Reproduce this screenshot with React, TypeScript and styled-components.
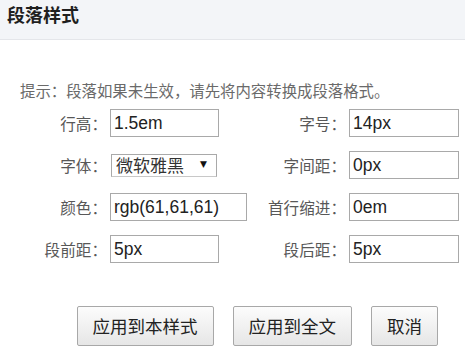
import React from "react";
import styled, { createGlobalStyle } from "styled-components";

const Global = createGlobalStyle`
  html, body { margin: 0; padding: 0; background: #fff; }
  body { width: 465px; height: 347px; overflow: hidden; font-family: "Noto Sans CJK SC", "Noto Sans", sans-serif; }
  * { box-sizing: border-box; }
`;

const Panel = styled.div`
  width: 465px;
  height: 347px;
  display: flex;
  flex-direction: column;
`;

const Header = styled.div`
  height: 40px;
  background: #f3f5f8;
  border-bottom: 1px solid #e4e6ea;
  display: flex;
  align-items: center;
  padding-left: 7px;
  padding-bottom: 11px;
`;

const Title = styled.h1`
  margin: 0;
  font-size: 18px;
  line-height: 20px;
  font-weight: 700;
  color: #1f1f1f;
  font-family: "Noto Sans CJK SC", sans-serif;
`;

const Body = styled.div`
  display: flex;
  flex-direction: column;
  padding-top: 40px;
`;

const Hint = styled.p`
  margin: 0 0 0 20px;
  font-size: 15.4px;
  line-height: 20px;
  color: #6a6a6a;
`;

const Rows = styled.div`
  display: flex;
  flex-direction: column;
  gap: 14px;
  margin-top: 9px;
`;

const Row = styled.div`
  display: flex;
  align-items: center;
  height: 28px;
`;

const Label = styled.label<{ $w: number }>`
  width: ${(p) => p.$w}px;
  text-align: right;
  font-size: 15.6px;
  line-height: 20px;
  color: #585858;
  padding-right: 3px;
  white-space: nowrap;
`;

const Field = styled.input<{ $w: number }>`
  width: ${(p) => p.$w}px;
  height: 28px;
  border: 1px solid #a9a9a9;
  padding: 0 0 0 3px;
  margin: 0;
  font-family: "Liberation Sans", Arial, sans-serif;
  font-size: 17.5px;
  color: #222;
  background: #fff;
  outline: none;
`;

const Select = styled.div`
  width: 106px;
  height: 23px;
  margin-left: 1px;
  border: 1px solid #a9a9a9;
  border-bottom-color: #c8c8c8;
  display: flex;
  align-items: center;
  justify-content: space-between;
  padding: 0 9px 0 4px;
  font-size: 17px;
  line-height: 20px;
  color: #333;
  background: #fff;
`;

const Arrow = styled.span`
  font-size: 9px;
  color: #111;
  font-family: "DejaVu Sans", sans-serif;
  margin-top: -2px;
`;

const Buttons = styled.div`
  display: flex;
  justify-content: flex-end;
  gap: 19px;
  padding-right: 27px;
  margin-top: 43px;
`;

const Button = styled.button`
  height: 40px;
  padding: 0 15px;
  border: 1px solid #a8a8a8;
  border-radius: 2px;
  background: linear-gradient(#fcfcfc, #e6e6e6);
  font-family: "Noto Sans CJK SC", sans-serif;
  font-size: 17.5px;
  color: #222;
  line-height: 20px;
`;

type Item = { label: string; value: string; w: number };

const left: (Item | null)[] = [
  { label: "行高：", value: "1.5em", w: 109 },
  null,
  { label: "颜色：", value: "rgb(61,61,61)", w: 137 },
  { label: "段前距：", value: "5px", w: 109 },
];
const right = [
  { label: "字号：", value: "14px" },
  { label: "字间距：", value: "0px" },
  { label: "首行缩进：", value: "0em" },
  { label: "段后距：", value: "5px" },
];

export default function App() {
  return (
    <>
      <Global />
      <Panel>
        <Header>
          <Title>段落样式</Title>
        </Header>
        <Body>
          <Hint>提示：段落如果未生效，请先将内容转换成段落格式。</Hint>
          <Rows>
            {right.map((r, i) => {
              const l = left[i];
              const used = l ? l.w : 107;
              return (
                <Row key={i}>
                  <Label $w={110}>{l ? l.label : "字体："}</Label>
                  {l ? (
                    <Field $w={l.w} defaultValue={l.value} readOnly />
                  ) : (
                    <Select>
                      <span>微软雅黑</span>
                      <Arrow>▼</Arrow>
                    </Select>
                  )}
                  <Label $w={239 - used}>{r.label}</Label>
                  <Field $w={110} defaultValue={r.value} readOnly />
                </Row>
              );
            })}
          </Rows>
          <Buttons>
            <Button>应用到本样式</Button>
            <Button>应用到全文</Button>
            <Button>取消</Button>
          </Buttons>
        </Body>
      </Panel>
    </>
  );
}
